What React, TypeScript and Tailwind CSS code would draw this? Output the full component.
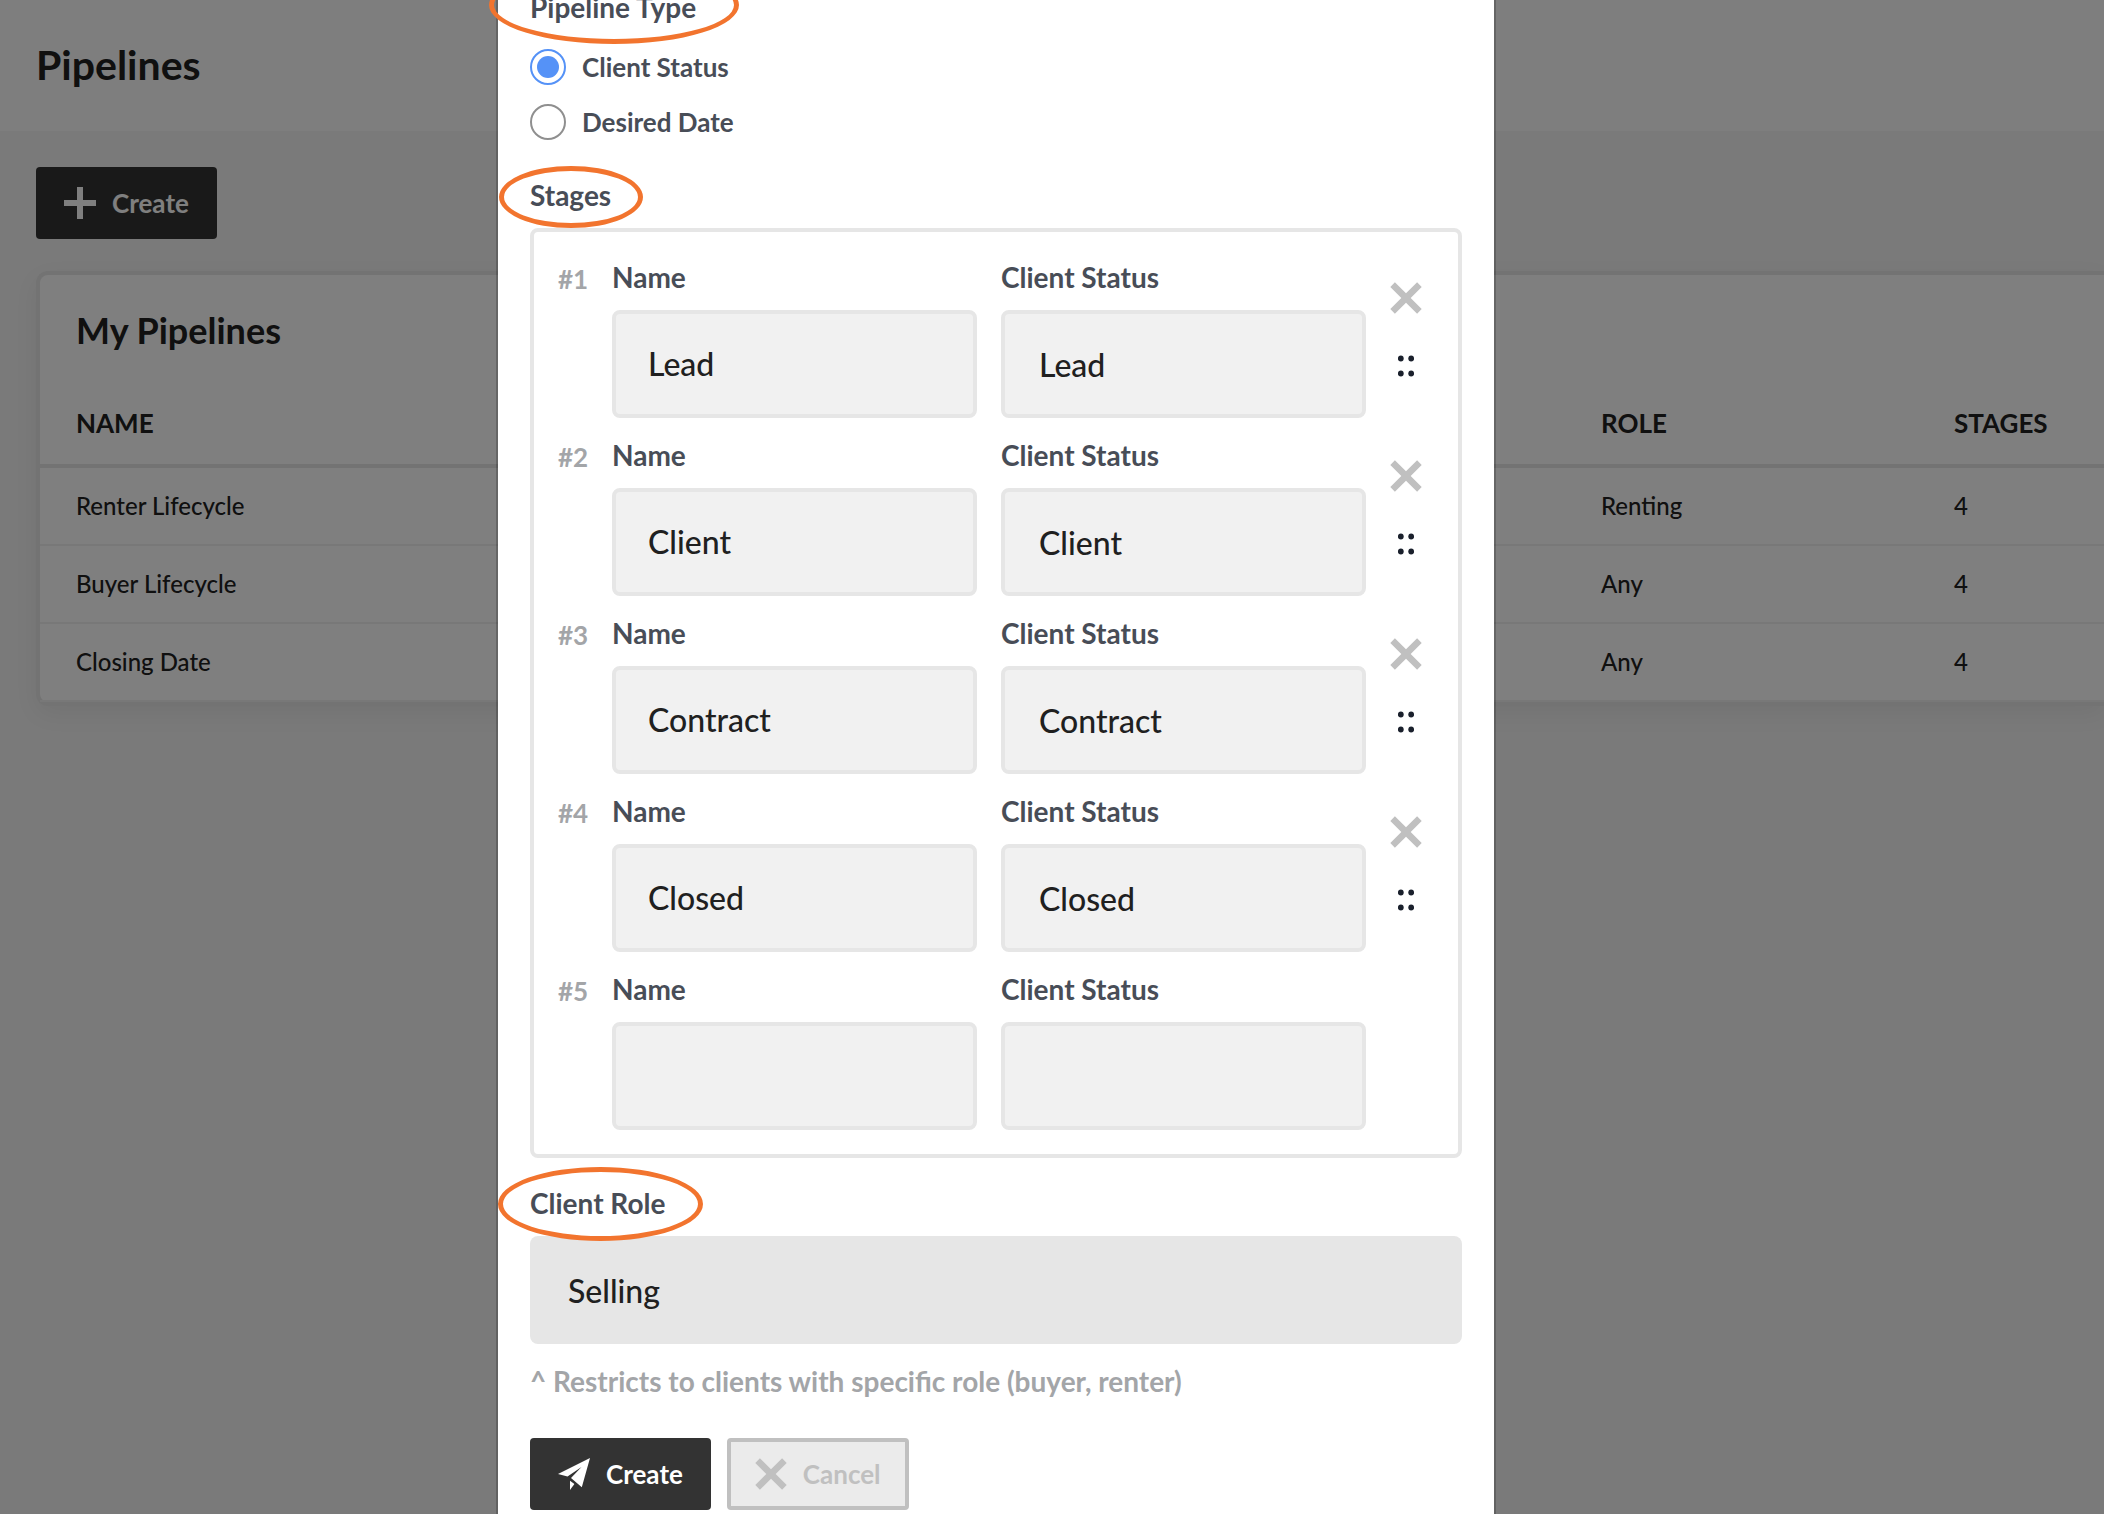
import { useState } from "react"
import clsx from "clsx"

const pipelines = [
  { name: "Renter Lifecycle", role: "Renting", stages: 4 },
  { name: "Buyer Lifecycle", role: "Any", stages: 4 },
  { name: "Closing Date", role: "Any", stages: 4 },
]

const statuses = ["", "Lead", "Client", "Contract", "Closed"]
const initialStages = ["Lead", "Client", "Contract", "Closed", ""]

function PlusIcon() {
  return (
    <svg className="size-8" viewBox="0 0 32 32" fill="currentColor" aria-hidden="true">
      <path d="M13 0h6v13h13v6H19v13h-6V19H0v-6h13z" />
    </svg>
  )
}

function CrossIcon() {
  return (
    <svg className="size-8" viewBox="0 0 32 32" fill="currentColor" aria-hidden="true">
      <path d="M4.9 0.3 16 11.2 27.1 0.3 31.7 4.9 20.7 16 31.7 27.1 27.1 31.7 16 20.8 4.9 31.7 0.3 27.1 11.3 16 0.3 4.9z" />
    </svg>
  )
}

function SendIcon() {
  return (
    <svg className="size-8" viewBox="0 0 32 32" fill="currentColor" aria-hidden="true">
      <path d="M32 0 0 16l9.5 2.4L23.5 9 13 20l10.8 9.3z" />
      <path d="M12 22.8V32l4.4-6z" />
    </svg>
  )
}

function DragIcon() {
  return (
    <svg className="h-[22px] w-4" viewBox="0 0 16 22" fill="currentColor" aria-hidden="true">
      <circle cx="2.8" cy="3.5" r="2.9" />
      <circle cx="13.2" cy="3.5" r="2.9" />
      <circle cx="2.8" cy="18.5" r="2.9" />
      <circle cx="13.2" cy="18.5" r="2.9" />
    </svg>
  )
}

function Ring({ className }: { className: string }) {
  return (
    <span
      className={clsx("pointer-events-none absolute z-10 rounded-[50%] border-[5px] border-[#f2742e]", className)}
    />
  )
}

interface StageRowProps {
  index: number
  value: string
  removable: boolean
}

function StageRow({ index, value, removable }: StageRowProps) {
  return (
    <div className="grid grid-cols-[30px_1fr_1fr_32px] gap-x-6">
      <div className="pt-0.5 text-[26px] leading-[42px] font-bold text-[#a3a5a8]">#{index}</div>
      <div>
        <label htmlFor={`name-${index}`} className="mb-3 block text-[28px] leading-[42px] font-bold">
          Name
        </label>
        <input
          id={`name-${index}`}
          type="text"
          defaultValue={value}
          className="h-[108px] w-full rounded-lg border-4 border-[#e6e6e6] bg-[#f1f1f1] px-8 pb-0.5 text-[32px] font-medium text-[#202020]"
        />
      </div>
      <div>
        <label htmlFor={`status-${index}`} className="mb-3 block text-[28px] leading-[42px] font-bold">
          Client Status
        </label>
        <select
          id={`status-${index}`}
          defaultValue={value}
          className="h-[108px] w-full appearance-none rounded-lg border-4 border-[#e6e6e6] bg-[#f1f1f1] px-[34px] pt-0.5 text-[32px] font-medium text-[#202020]"
        >
          {statuses.map((s) => (
            <option key={s} value={s}>
              {s}
            </option>
          ))}
        </select>
      </div>
      {removable && (
        <div className="flex flex-col items-center gap-[41px] pt-[26px]">
          <button type="button" aria-label="Remove stage" className="text-[#c0c0c0]">
            <CrossIcon />
          </button>
          <button type="button" aria-label="Move stage" className="text-[#1a202c]">
            <DragIcon />
          </button>
        </div>
      )}
    </div>
  )
}

function PipelinesPage() {
  return (
    <div className="min-h-screen bg-[#f4f4f4] text-[#202020]">
      <header className="bg-[#fcfcfc] px-9 pt-[41px] pb-[42px]">
        <h1 className="text-[41px] leading-[48px] font-bold">Pipelines</h1>
      </header>
      <main className="pt-9 pl-9">
        <button
          type="button"
          className="flex h-[72px] items-center gap-4 rounded bg-[#333] px-7 text-[26px] font-bold text-white"
        >
          <PlusIcon />
          Create
        </button>
        <section className="mt-8 rounded-l-xl border-4 border-r-0 border-[#e6e6e6] bg-white shadow-[0_8px_24px_rgba(0,0,0,0.06)]">
          <h2 className="px-9 pt-[31px] pb-[25px] text-[36px] leading-[48px] font-bold">My Pipelines</h2>
          <table className="w-full table-fixed border-separate border-spacing-0 text-left">
            <thead className="text-[26px]">
              <tr>
                <th className="h-[89px] border-b-4 border-[#e6e6e6] px-9 pt-1 font-bold">NAME</th>
                <th className="w-[353px] border-b-4 border-[#e6e6e6] px-9 pt-1 font-bold">ROLE</th>
                <th className="w-[186px] border-b-4 border-[#e6e6e6] pt-1 pl-9 font-bold">STAGES</th>
              </tr>
            </thead>
            <tbody className="text-2xl font-medium">
              {pipelines.map((p) => (
                <tr key={p.name}>
                  <td className="h-[78px] border-b-2 border-[#f1f1f1] px-9">{p.name}</td>
                  <td className="border-b-2 border-[#f1f1f1] px-9">{p.role}</td>
                  <td className="border-b-2 border-[#f1f1f1] pl-9">{p.stages}</td>
                </tr>
              ))}
            </tbody>
          </table>
        </section>
      </main>
    </div>
  )
}

function PipelineDialog() {
  const [type, setType] = useState("Client Status")

  return (
    <div className="fixed inset-0 flex items-start justify-center overflow-hidden bg-black/50 pr-28">
      <form
        role="dialog"
        aria-label="Create pipeline"
        className="-mt-[46px] min-h-[110vh] w-full max-w-[1000px] border-2 border-black/20 bg-white bg-clip-padding p-8 pt-[30px] text-[#484d57]"
      >
        <fieldset>
          <legend className="relative text-[28px] leading-[42px] font-bold">
            Pipeline Type
            <Ring className="-top-5 -left-[41px] h-[78px] w-[250px]" />
          </legend>
          <div className="mt-[21px] flex flex-col gap-[19px]">
            {["Client Status", "Desired Date"].map((t) => (
              <label key={t} className="flex h-9 items-center gap-4 text-[26px] font-bold">
                <input
                  type="radio"
                  name="type"
                  checked={type === t}
                  onChange={() => setType(t)}
                  className="size-9 appearance-none rounded-full border-2 border-[#8f8f8f] bg-white checked:border-[#5592f7] checked:bg-[#5592f7] checked:bg-clip-content checked:p-[5px]"
                />
                {t}
              </label>
            ))}
          </div>
        </fieldset>

        <h3 className="relative mt-[34px] mb-3 text-[28px] leading-[42px] font-bold">
          Stages
          <Ring className="-top-2 -left-[31px] h-[62px] w-36" />
        </h3>
        <div className="flex flex-col gap-4 rounded-lg border-4 border-[#e6e6e6] py-6 pr-9 pl-6">
          {initialStages.map((stage, i) => (
            <StageRow key={i} index={i + 1} value={stage} removable={i < initialStages.length - 1} />
          ))}
        </div>

        <label htmlFor="role" className="relative mt-6 mb-3 block text-[28px] leading-[42px] font-bold">
          Client Role
          <Ring className="-top-[15px] -left-8 h-[74px] w-[205px]" />
        </label>
        <select
          id="role"
          defaultValue="Selling"
          className="block h-[108px] w-full appearance-none rounded-lg bg-[#e6e6e6] px-[38px] pt-0.5 text-[32px] font-medium text-[#202020]"
        >
          <option>Any</option>
          <option>Buying</option>
          <option>Renting</option>
          <option>Selling</option>
        </select>
        <p className="mt-4 text-[28px] leading-[42px] font-bold text-[#a3a5a8]">
          ^ Restricts to clients with specific role (buyer, renter)
        </p>

        <div className="mt-9 flex gap-4 text-[26px] font-bold">
          <button type="submit" className="flex h-[72px] items-center gap-4 rounded bg-[#333] px-7 text-white">
            <SendIcon />
            Create
          </button>
          <button
            type="button"
            className="flex h-[72px] items-center gap-4 rounded border-4 border-[#c0c0c0] bg-[#ebebeb] px-6 text-[#c0c0c0]"
          >
            <CrossIcon />
            Cancel
          </button>
        </div>
      </form>
    </div>
  )
}

export default function App() {
  return (
    <div className="font-[Lato,sans-serif]">
      <PipelinesPage />
      <PipelineDialog />
    </div>
  )
}
